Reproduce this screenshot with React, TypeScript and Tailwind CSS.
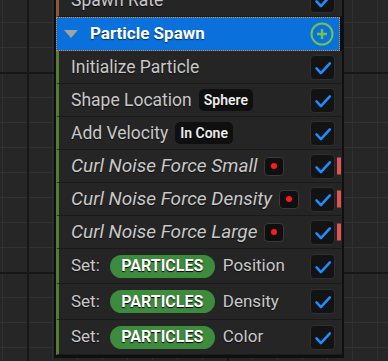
import React from "react";

const Check = () => (
  <div className="w-[25px] h-[25px] rounded-[4px] bg-[#131313] border border-[#2f2f2f] flex items-center justify-center shrink-0">
    <svg width="25" height="25" viewBox="0 0 25 25">
      <path d="M6 13.5 L10.8 18.5 L20.5 8" fill="none" stroke="#1e8cff" strokeWidth="2.8" strokeLinecap="round" strokeLinejoin="round" />
    </svg>
  </div>
);

const RedDot = () => (
  <div className="ml-[7px] w-[20px] h-[19px] rounded-[4px] bg-[#0f0f0f] border border-[#3a3a3a] flex items-center justify-center shrink-0">
    <div className="w-[6px] h-[6px] rounded-full bg-[#ff1a1a]" />
  </div>
);

const Row = ({
  children,
  h,
  stripe = "border-l-[#587a36]",
  bar = false,
}: {
  children: React.ReactNode;
  h: string;
  stripe?: string;
  bar?: boolean;
}) => (
  <div className={`relative flex items-center ${h} border-b border-b-[#1a1a1a] border-l-[3px] ${stripe} bg-[#252525] pl-[12px] pr-[7px]`}>
    {children}
    <div className="ml-auto">
      <Check />
    </div>
    {bar && <div className="absolute right-[1px] top-1/2 -translate-y-1/2 w-[4px] h-[17px] bg-[#e05454]" />}
  </div>
);

const Pill = ({ children }: { children: React.ReactNode }) => (
  <span className="ml-[7px] h-[22px] px-[5px] rounded-[5px] bg-[#0f0f0f] text-[14px] font-semibold text-[#ececec] flex items-center not-italic">
    {children}
  </span>
);

const SetRow = ({ attr, h }: { attr: string; h: string }) => (
  <Row h={h}>
    <span>Set:</span>
    <span className="ml-[10px] h-[23px] w-[105px] rounded-full bg-[#3d8b3d] flex items-center justify-center text-[16px] font-bold text-white [text-shadow:0_1px_1px_#000]">
      PARTICLES
    </span>
    <span className="ml-[8px]">{attr}</span>
  </Row>
);

export default function App() {
  return (
    <div className="w-[388px] h-[361px] overflow-hidden bg-[#262626] bg-[linear-gradient(to_right,#161616_2px,transparent_2px),linear-gradient(to_bottom,#161616_2px,transparent_2px),linear-gradient(to_right,#313131_1px,transparent_1px),linear-gradient(to_bottom,#313131_1px,transparent_1px)] bg-size-[200px_200px,200px_200px,25px_25px,25px_25px] bg-position-[27px_0,0_72px,2px_0,0_22px] font-['Roboto',sans-serif] text-[17px] text-[#c8c8c8] [text-shadow:0_1px_1px_rgba(0,0,0,0.6)]">
      <div className="ml-[54px] -mt-[16px] w-[290px] bg-[#0f0f0f] px-[2px] pb-[3px]">
        <Row h="h-[33px]" stripe="border-l-[#8c5a3a]">
          <span className="text-[17.5px]">Spawn Rate</span>
        </Row>
        <div className="h-[34px] mr-[2px] bg-[#0a70dc] border border-dotted border-[#e0892a] flex items-center pl-[7px] pr-[5px]">
          <svg width="14" height="8" viewBox="0 0 14 8">
            <path d="M0 0 L14 0 L7 8 Z" fill="#a2a2a2" />
          </svg>
          <span className="ml-[12px] font-bold text-white text-[17px]">Particle Spawn</span>
          <svg className="ml-auto" width="24" height="24" viewBox="0 0 24 24">
            <circle cx="12" cy="12" r="10.5" fill="none" stroke="#72c24c" strokeWidth="2" />
            <path d="M12 7 L12 17 M7 12 L17 12" stroke="#72c24c" strokeWidth="2.4" />
          </svg>
        </div>
        <Row h="h-[33px]">
          <span className="text-[17.5px]">Initialize Particle</span>
        </Row>
        <Row h="h-[33px]">
          <span className="text-[17.5px]">Shape Location</span>
          <Pill>Sphere</Pill>
        </Row>
        <Row h="h-[33px]">
          <span className="text-[17.5px]">Add Velocity</span>
          <Pill>In Cone</Pill>
        </Row>
        <Row h="h-[33px]" bar>
          <span className="italic text-[19px]">Curl Noise Force Small</span>
          <RedDot />
        </Row>
        <Row h="h-[33px]" bar>
          <span className="italic text-[19px]">Curl Noise Force Density</span>
          <RedDot />
        </Row>
        <Row h="h-[33px]" bar>
          <span className="italic text-[19px]">Curl Noise Force Large</span>
          <RedDot />
        </Row>
        <SetRow attr="Position" h="h-[35px]" />
        <SetRow attr="Density" h="h-[36px]" />
        <SetRow attr="Color" h="h-[35px]" />
      </div>
    </div>
  );
}
